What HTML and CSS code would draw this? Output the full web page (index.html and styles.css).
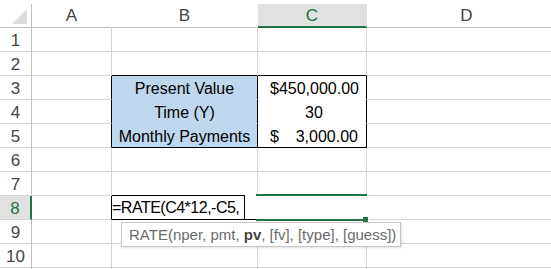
FILE: index.html
```html
<!DOCTYPE html>
<html lang="en">
<head>
    <meta charset="UTF-8">
    <meta name="viewport" content="width=device-width, initial-scale=1.0">
    <title>RATE</title>
    <link rel="stylesheet" href="styles.css">
</head>
<body>
    <div class="sheet">
        <!-- column headers -->
        <div class="c corner"><div class="tri"></div></div>
        <div class="c hd">A</div>
        <div class="c hd">B</div>
        <div class="c hd hd-sel">C</div>
        <div class="c hd">D</div>

        <div class="c rn">1</div><div class="c"></div><div class="c"></div><div class="c"></div><div class="c"></div>
        <div class="c rn">2</div><div class="c"></div><div class="c top-b"></div><div class="c top-b"></div><div class="c"></div>

        <div class="c rn">3</div>
        <div class="c left-b"></div>
        <div class="c lbl">Present Value</div>
        <div class="c val num">$450,000.00</div>
        <div class="c"></div>

        <div class="c rn">4</div>
        <div class="c left-b"></div>
        <div class="c lbl">Time (Y)</div>
        <div class="c val mid">30</div>
        <div class="c"></div>

        <div class="c rn">5</div>
        <div class="c left-b"></div>
        <div class="c lbl last">Monthly Payments</div>
        <div class="c val last acct"><span>$</span><span>3,000.00</span></div>
        <div class="c"></div>

        <div class="c rn">6</div><div class="c"></div><div class="c"></div><div class="c"></div><div class="c"></div>
        <div class="c rn">7</div><div class="c"></div><div class="c no-bottom"></div><div class="c"></div><div class="c"></div>

        <div class="c rn rn-sel">8</div>
        <div class="c left-b"></div>
        <div class="c edit-cell"><div class="editor">=RATE(C4*12,-C5,</div></div>
        <div class="c active"><span class="handle"></span></div>
        <div class="c"></div>

        <div class="c rn">9</div><div class="c"></div><div class="c"></div><div class="c"></div><div class="c"></div>
        <div class="c rn">10</div><div class="c"></div><div class="c"></div><div class="c"></div><div class="c"></div>
        <div class="c rn"></div><div class="c"></div><div class="c"></div><div class="c"></div><div class="c"></div>

        <div class="tip">RATE(nper, pmt, <b>pv</b>, [fv], [type], [guess])</div>
    </div>
</body>
</html>
```

FILE: styles.css
```css
body {
    margin: 0;
    background: #fff;
    font-family: "Liberation Sans", Arial, sans-serif;
    overflow: hidden;
}
.sheet {
    position: relative;
    margin-top: 4px;
    display: grid;
    grid-template-columns: 32px 80px 146px 109px 200px;
    grid-auto-rows: 24px;
}
.c {
    box-sizing: border-box;
    border-right: 1px solid #d4d4d4;
    border-bottom: 1px solid #d4d4d4;
    font-size: 16px;
    line-height: 23px;
    color: #000;
    white-space: nowrap;
}

/* headers */
.corner {
    border-right-color: #bfbfbf;
    border-bottom-color: #bfbfbf;
    display: flex;
    justify-content: flex-end;
    align-items: flex-end;
    padding: 0 4px 3px 0;
}
.tri {
    width: 15px;
    height: 15px;
    background: #dcdcdc;
    clip-path: polygon(100% 0, 100% 100%, 0 100%);
}
.hd {
    border-right-color: transparent;
    border-bottom-color: #bfbfbf;
    text-align: center;
    font-size: 17px;
    color: #444;
}
.hd-sel {
    background: #e1e1e1;
    color: #217346;
    border-bottom: 2px solid #217346;
}
.rn {
    border-right-color: #bfbfbf;
    text-align: center;
    font-size: 17px;
    color: #444;
    padding-top: 1px;
}
.rn-sel {
    background: #e1e1e1;
    color: #217346;
    border-right: 2px solid #217346;
}

/* table box */
.top-b { border-bottom-color: #000; }
.left-b { border-right-color: #000; }
.lbl {
    background: #bdd7ee;
    border-bottom-color: #bdd7ee;
    border-right-color: #000;
    text-align: center;
    padding-top: 1px;
}
.val {
    border-bottom-color: #fff;
    border-right-color: #000;
    padding: 1px 8px 0 12px;
}
.lbl.last, .val.last { border-bottom-color: #000; }
.num { text-align: right; }
.mid { text-align: center; }
.acct {
    display: flex;
    justify-content: space-between;
}

/* cell editor */
.no-bottom { border-bottom-color: #fff; }
.edit-cell {
    border-right-color: #fff;
    border-bottom-color: #000;
}
.editor {
    box-sizing: border-box;
    width: 133px;
    height: 24px;
    margin-top: -1px;
    border-top: 1px solid #000;
    border-right: 1px solid #000;
    background: #fff;
    line-height: 24px;
    letter-spacing: -0.5px;
}

/* active cell C8 */
.active {
    position: relative;
    border-right-color: #fff;
}
.active::before {
    content: "";
    position: absolute;
    left: -2px;
    right: -1px;
    top: -2px;
    height: 2px;
    background: #217346;
}
.active::after {
    content: "";
    position: absolute;
    left: -2px;
    width: 107px;
    top: 23px;
    height: 2px;
    background: #217346;
}
.handle {
    position: absolute;
    left: 105px;
    top: 21px;
    width: 5px;
    height: 5px;
    background: #217346;
    box-shadow: 0 0 0 1px #fff;
}

/* function tooltip */
.tip {
    position: absolute;
    left: 121px;
    top: 218px;
    box-sizing: border-box;
    width: 280px;
    height: 25px;
    padding: 0 7px;
    background: #fff;
    border: 1px solid #c6c6c6;
    box-shadow: 1px 1px 2px rgba(0, 0, 0, 0.12);
    font-size: 15px;
    line-height: 23px;
    color: #6a6a6a;
    white-space: nowrap;
}
.tip b { color: #444; }
```
